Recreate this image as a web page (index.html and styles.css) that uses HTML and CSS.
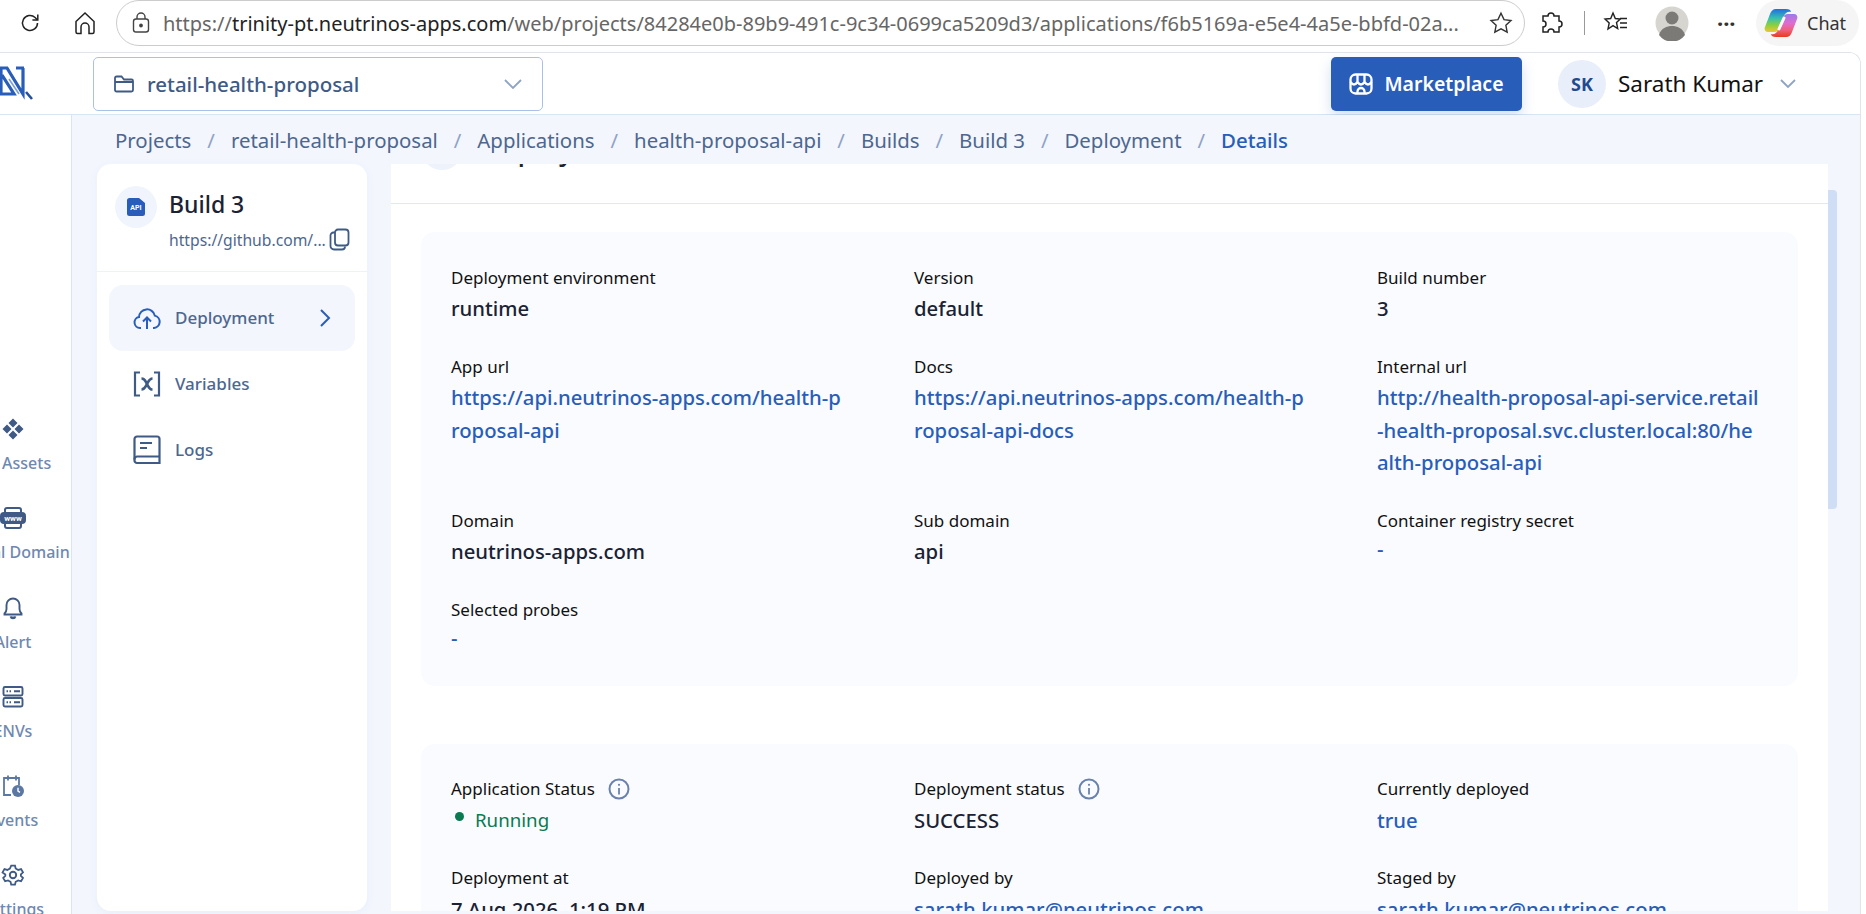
FILE: index.html
```html
<!DOCTYPE html>
<html lang="en">
<head>
  <meta charset="UTF-8" />
  <title>Deployment Details</title>
  <link rel="stylesheet" href="styles.css">
</head>
<body>
  <!-- Browser toolbar -->
  <div class="browser-bar">
    <svg class="b-reload" width="24" height="24" viewBox="0 0 24 24" fill="none" stroke="#222" stroke-width="1.5"><path d="M19.5 12a7.5 7.5 0 1 1-2.4-5.5L19.5 9"/><path d="M19.8 3.5V9h-5.4"/></svg>
    <svg class="b-home" width="24" height="26" viewBox="0 0 24 26" fill="none" stroke="#222" stroke-width="1.5"><path d="M3 11.5 12 3l9 8.5V22a1.5 1.5 0 0 1-1.5 1.5H16V17a4 4 0 0 0-8 0v6.500H4.500A1.500 1.500 0 0 1 3 22z"/></svg>
    <div class="address">
      <svg width="20" height="22" viewBox="0 0 20 22" fill="none" stroke="#444" stroke-width="1.4"><rect x="2.500" y="7" width="15" height="13" rx="2.500"/><path d="M6 7V5a4 4 0 0 1 8 0v2"/><circle cx="10" cy="13.500" r="1.200" fill="#444"/></svg>
      <span class="url"><span class="url-dim">https://</span>trinity-pt.neutrinos-apps.com<span class="url-dim">/web/projects/84284e0b-89b9-491c-9c34-0699ca5209d3/applications/f6b5169a-e5e4-4a5e-bbfd-02a...</span></span>
      <svg class="star" width="26" height="26" viewBox="0 0 24 24" fill="none" stroke="#333" stroke-width="1.300"><path d="m12 3 2.800 5.900 6.400.8-4.700 4.400 1.200 6.400L12 17.400l-5.700 3.100 1.200-6.400-4.700-4.400 6.400-.8z"/></svg>
    </div>
    <svg class="b-ext" width="24" height="26" viewBox="0 0 24 26" fill="none" stroke="#222" stroke-width="1.500"><path d="M9 6a3 3 0 0 1 6 0h5v5a3 3 0 0 1 0 6v5h-5a3 3 0 0 0-6 0H4v-5a3 3 0 0 0 0-6V6z"/></svg>
    <span class="b-sep"></span>
    <svg class="b-fav" width="28" height="28" viewBox="0 0 28 28" fill="none" stroke="#222" stroke-width="1.400"><path d="m11 4 2.300 5.500 5 .5-3.800 3.500 1.200 6L11 16.700 6 20l1.200-6L3 10l5.700-.5z"/><path d="M18 9.500h7M18 14h7M18 18.500h7"/></svg>
    <div class="b-profile">
      <svg width="36" height="36" viewBox="0 0 36 36"><circle cx="18" cy="18" r="16.500" fill="#d6d5d0"/><circle cx="18" cy="13" r="6.500" fill="#7c7a76"/><path d="M5 30c2-7 8-9 13-9s11 2 13 9a16 16 0 0 1-26 0z" fill="#7c7a76"/></svg>
    </div>
    <span class="b-dots">···</span>
    <div class="chat-pill">
      <svg width="34" height="30" viewBox="0 0 34 30">
        <defs>
          <linearGradient id="cpA" x1="0" y1="0" x2="0" y2="1"><stop offset="0" stop-color="#1f6fe0"/><stop offset=".4" stop-color="#36c0b0"/><stop offset=".7" stop-color="#8bd040"/><stop offset="1" stop-color="#f4c430"/></linearGradient>
          <linearGradient id="cpB" x1="0" y1="0" x2="0" y2="1"><stop offset="0" stop-color="#9a7ae8"/><stop offset=".4" stop-color="#e06cd0"/><stop offset=".7" stop-color="#f0607a"/><stop offset="1" stop-color="#e8381e"/></linearGradient>
        </defs>
        <path d="M12 1H22C25 1 27 2 27 4C24 3 21 5 20 8L16 19C15 22 13 24 10 24H4C1 24 0 21 1 19L6 6C7 3 9 1 12 1Z" fill="url(#cpA)"/>
        <path d="M22 29H12C9 29 7 28 7 26C10 27 13 25 14 22L18 11C19 8 21 6 24 6H30C33 6 34 9 33 11L28 24C27 27 25 29 22 29Z" fill="url(#cpB)"/>
        <path d="M20 10 15 21" stroke="#fff" stroke-width="3" stroke-linecap="round"/>
      </svg>
      <span>Chat</span>
    </div>
  </div>

  <div class="app">
    <header class="topbar">
      <svg class="logo" width="34" height="38" viewBox="0 0 34 38" fill="none" stroke="#285db9" stroke-width="3.200">
        <path d="M0 3h7l16 26V3"/>
        <path d="M1 3v26h13L2 10"/>
        <path d="M16 3h8"/>
        <path d="M9 14 19 29" stroke="#7ba0dc" stroke-width="1.600"/>
        <path d="M26 27l6 7" stroke-width="2.600" stroke="#234f9e"/>
      </svg>
      <div class="project-select">
        <svg width="22" height="20" viewBox="0 0 22 20" fill="none" stroke="#3e5a85" stroke-width="1.800"><path d="M2 16V4a1.500 1.500 0 0 1 1.500-1.500h5L11 5.500h7.500A1.500 1.500 0 0 1 20 7v9a1.500 1.500 0 0 1-1.500 1.500h-15A1.500 1.500 0 0 1 2 16z"/><path d="M2 8h18"/></svg>
        <span class="project-name">retail-health-proposal</span>
        <svg class="select-arrow" width="20" height="12" viewBox="0 0 20 12" fill="none" stroke="#8ea3c6" stroke-width="1.800"><path d="m2 2 8 8 8-8"/></svg>
      </div>
      <button class="market-btn">
        <svg width="24" height="22" viewBox="0 0 24 22" fill="none" stroke="#fff" stroke-width="2.300"><rect x="1.500" y="1.500" width="21" height="19" rx="5"/><path d="M8.500 2v7M15.500 2v7M1.500 9q3.500 5 7 0 3.500 5 7 0 3.500 5 7 0M8.500 20.500v-2a3.500 3.500 0 0 1 7 0v2"/></svg>
        Marketplace
      </button>
      <div class="user">
        <span class="avatar">SK</span>
        <span class="user-name">Sarath Kumar</span>
        <svg width="18" height="11" viewBox="0 0 18 11" fill="none" stroke="#8ea3c6" stroke-width="1.800"><path d="m2 2 7 7 7-7"/></svg>
      </div>
    </header>

    <div class="layout">
      <nav class="sidenav">
        <div class="sidenav-items">
          <a class="side-item">
            <svg width="24" height="24" viewBox="0 0 24 24" fill="#3e5a85"><path d="m12 1.500 4.500 4.500-4.500 4.500L7.500 6zM6 7.500l4.500 4.500L6 16.500 1.500 12zM18 7.500l4.500 4.500-4.500 4.500-4.500-4.500zM12 13.500l4.500 4.500-4.500 4.500L7.500 18z"/></svg>
            <span>My Assets</span>
          </a>
          <a class="side-item">
            <svg width="26" height="24" viewBox="0 0 26 24" fill="none" stroke="#3e5a85" stroke-width="2"><path d="M5 7V4a2 2 0 0 1 2-2h12a2 2 0 0 1 2 2v3M5 17v3a2 2 0 0 0 2 2h12a2 2 0 0 0 2-2v-3"/><rect x="1" y="7" width="24" height="10" rx="3" fill="#3e5a85"/><text x="13" y="15" font-size="8" font-weight="700" fill="#fff" stroke="none" text-anchor="middle" font-family="Roboto, sans-serif">www</text></svg>
            <span>Global Domain</span>
          </a>
          <a class="side-item">
            <svg width="24" height="24" viewBox="0 0 24 24" fill="none" stroke="#3e5a85" stroke-width="1.900"><path d="M12 2.500a6.500 6.500 0 0 0-6.500 6.500v4c0 2-1 3.500-2 4.500v1h17v-1c-1-1-2-2.500-2-4.500V9A6.500 6.500 0 0 0 12 2.500z"/><path d="M9.500 20.500a2.600 2.600 0 0 0 5 0" fill="#3e5a85"/></svg>
            <span>Alert</span>
          </a>
          <a class="side-item">
            <svg width="24" height="24" viewBox="0 0 24 24" fill="none" stroke="#3e5a85" stroke-width="1.900"><rect x="2.500" y="2" width="19" height="8.500" rx="1.500"/><rect x="2.500" y="13" width="19" height="8.500" rx="1.500"/><path d="M5.500 6.300h1.500M8.500 6.300H10M13 6.300h6M5.500 17.300h1.500M8.500 17.300H10M13 17.300h6"/></svg>
            <span>ENVs</span>
          </a>
          <a class="side-item">
            <svg width="24" height="24" viewBox="0 0 24 24" fill="none" stroke="#5b77a3" stroke-width="1.800"><path d="M10 21H3V4h15v7M7 1.500v5M15 1.500v5"/><circle cx="17" cy="17" r="6" fill="#5b77a3" stroke="none"/><path d="M17 13.800V17l2 1.300" stroke="#fff" stroke-width="1.400"/></svg>
            <span>Events</span>
          </a>
          <a class="side-item">
            <svg width="24" height="24" viewBox="0 0 24 24" fill="none" stroke="#3e5a85" stroke-width="1.900"><circle cx="12" cy="12" r="3.200"/><path d="M10 2.500h4l.7 3 2.700 1.500 3-.9 2 3.500-2.200 2.100v1.600l2.200 2.100-2 3.500-3-.9-2.700 1.500-.7 3h-4l-.7-3-2.700-1.500-3 .9-2-3.500 2.200-2.100v-1.600L.9 9.600l2-3.500 3 .9L8.600 5.500z" transform="translate(.7 .3) scale(.95)"/></svg>
            <span>Settings</span>
          </a>
        </div>
      </nav>

      <main class="main">
        <div class="breadcrumb">
          <a>Projects</a><i>/</i>
          <a>retail-health-proposal</a><i>/</i>
          <a>Applications</a><i>/</i>
          <a>health-proposal-api</a><i>/</i>
          <a>Builds</a><i>/</i>
          <a>Build 3</a><i>/</i>
          <a>Deployment</a><i>/</i>
          <a class="current">Details</a>
        </div>

        <div class="content">
          <aside class="build-card">
            <div class="build-head">
              <span class="build-icon">
                <svg width="18" height="18" viewBox="0 0 18 18"><path d="M2.500 0H12l6 5v10.500a2.500 2.500 0 0 1-2.500 2.500h-13A2.500 2.500 0 0 1 0 15.500v-13A2.500 2.500 0 0 1 2.500 0z" fill="#285db9"/><text x="9" y="12" font-size="7" font-weight="700" fill="#fff" text-anchor="middle" font-family="Roboto, sans-serif">API</text></svg>
              </span>
              <div class="build-info">
                <div class="build-name">Build 3</div>
                <div class="build-url">
                  <span>https://github.com/...</span>
                  <svg width="21" height="23" viewBox="0 0 21 23" fill="none" stroke="#3e5a85" stroke-width="1.800"><rect x="6" y="1.500" width="13.500" height="16" rx="3"/><path d="M6 4.500H4.500a3 3 0 0 0-3 3V18a3.500 3.500 0 0 0 3.500 3.500h8a3 3 0 0 0 3-3"/></svg>
                </div>
              </div>
            </div>
            <div class="build-menu">
              <a class="menu-item active">
                <svg width="28" height="26" viewBox="0 0 28 26" fill="none" stroke="#285db9" stroke-width="2"><path d="M8 23H7a5.500 5.500 0 0 1-1-10.900 8 8 0 0 1 15.800-1.500A6.300 6.300 0 0 1 21 23h-1"/><path d="M14 24V13M10 16.500l4-4 4 4"/></svg>
                <span>Deployment</span>
                <svg class="menu-arrow" width="12" height="20" viewBox="0 0 12 20" fill="none" stroke="#285db9" stroke-width="2"><path d="m2 2 8 8-8 8"/></svg>
              </a>
              <a class="menu-item">
                <svg width="28" height="26" viewBox="0 0 28 26" fill="none" stroke="#3e5a85" stroke-width="2.200"><path d="M7 1.500H2v23h5M21 1.500h5v23h-5"/><path d="M8.500 7.500c3.500 0 3.500 2 5.500 5.500s2 5.500 5.500 5.500M19.500 7.500c-3 0-3.500 2-5.500 5.500s-2.500 5.500-5.500 5.500" stroke-width="2.600"/></svg>
                <span>Variables</span>
              </a>
              <a class="menu-item">
                <svg width="28" height="30" viewBox="0 0 28 30" fill="none" stroke="#3e5a85" stroke-width="2.200"><path d="M4 1.500h20a2.500 2.500 0 0 1 2.500 2.500v24H4a2.500 2.500 0 0 1-2.500-2.500V4A2.500 2.500 0 0 1 4 1.500z"/><path d="M1.500 24.500A3 3 0 0 1 4 21.500h22.500M7 8h12M7 13h7"/></svg>
                <span>Logs</span>
              </a>
            </div>
          </aside>

          <section class="panel">
            <div class="panel-head">
              <div class="panel-title">
                <span class="panel-circle"></span>
                <h2>Deployment</h2>
              </div>
            </div>

            <div class="info-box first">
              <div class="info-grid">
                <div class="field"><label>Deployment environment</label><div class="val">runtime</div></div>
                <div class="field"><label>Version</label><div class="val">default</div></div>
                <div class="field"><label>Build number</label><div class="val">3</div></div>

                <div class="field"><label>App url</label><div class="val link">https://api.neutrinos-apps.com/health-p<br>roposal-api</div></div>
                <div class="field"><label>Docs</label><div class="val link">https://api.neutrinos-apps.com/health-p<br>roposal-api-docs</div></div>
                <div class="field"><label>Internal url</label><div class="val link">http://health-proposal-api-service.retail<br>-health-proposal.svc.cluster.local:80/he<br>alth-proposal-api</div></div>

                <div class="field"><label>Domain</label><div class="val">neutrinos-apps.com</div></div>
                <div class="field"><label>Sub domain</label><div class="val">api</div></div>
                <div class="field"><label>Container registry secret</label><div class="val link dash">-</div></div>

                <div class="field"><label>Selected probes</label><div class="val link dash">-</div></div>
              </div>
            </div>

            <div class="info-box">
              <div class="info-grid">
                <div class="field">
                  <label>Application Status
                    <svg class="info-icon" width="22" height="22" viewBox="0 0 22 22" fill="none" stroke="#6a82ab" stroke-width="2"><circle cx="11" cy="11" r="9.500"/><path d="M11 10v6.500" stroke-width="1.800"/><circle cx="11" cy="6.800" r="1.100" fill="#6a82ab" stroke="none"/></svg>
                  </label>
                  <div class="val running"><span class="dot"></span>Running</div>
                </div>
                <div class="field">
                  <label>Deployment status
                    <svg class="info-icon" width="22" height="22" viewBox="0 0 22 22" fill="none" stroke="#6a82ab" stroke-width="2"><circle cx="11" cy="11" r="9.500"/><path d="M11 10v6.500" stroke-width="1.800"/><circle cx="11" cy="6.800" r="1.100" fill="#6a82ab" stroke="none"/></svg>
                  </label>
                  <div class="val">SUCCESS</div>
                </div>
                <div class="field"><label>Currently deployed</label><div class="val link">true</div></div>

                <div class="field"><label>Deployment at</label><div class="val">7 Aug 2026, 1:19 PM</div></div>
                <div class="field"><label>Deployed by</label><div class="val link">sarath.kumar@neutrinos.com</div></div>
                <div class="field"><label>Staged by</label><div class="val link">sarath.kumar@neutrinos.com</div></div>
              </div>
            </div>
          </section>

          <div class="scroll-track"><div class="scroll-thumb"></div></div>
        </div>
      </main>
    </div>
  </div>
</body>
</html>
```

FILE: styles.css
```css
* {
  box-sizing: border-box;
}
html, body {
  margin: 0;
  height: 914px;
  overflow: hidden;
}
body {
  font-family: 'Noto Sans', 'Roboto', sans-serif;
  background-color: #fff;
  color: #1a2233;
}
a {
  text-decoration: none;
}

/* Browser toolbar */
.browser-bar {
  height: 52px;
  display: flex;
  align-items: center;
  padding-bottom: 6px;
  background: #fff;
}
.b-reload {
  margin-left: 18px;
}
.b-home {
  margin-left: 31px;
}
.address {
  margin-left: 19px;
  width: 1409px;
  height: 46px;
  border: 1.5px solid #ccc;
  border-radius: 23px;
  display: flex;
  align-items: center;
  padding-left: 14px;
  gap: 12px;
}
.url {
  flex: 1;
  font-size: 20px;
  white-space: nowrap;
  overflow: hidden;
  color: #222;
}
.url-dim {
  color: #666;
}
.star {
  margin-right: 10px;
}
.b-ext {
  margin-left: 14px;
}
.b-sep {
  width: 1px;
  height: 24px;
  background: #999;
  margin-left: 21px;
}
.b-fav {
  margin-left: 17px;
}
.b-profile {
  margin-left: 24px;
  height: 36px;
}
.b-dots {
  margin-left: 27px;
  font-size: 22px;
  font-weight: 700;
  color: #333;
  width: 28px;
}
.chat-pill {
  margin-left: 11px;
  width: 103px;
  height: 46px;
  border-radius: 23px;
  background: #f5f5f5;
  display: flex;
  align-items: center;
  gap: 9px;
  padding-left: 8px;
  font-size: 18px;
  color: #333;
}

/* App frame */
.app {
  width: 1861px;
  height: 862px;
  border-top: 1px solid #dfe3ea;
  border-right: 1px solid #dfe3ea;
  border-top-right-radius: 12px;
  display: flex;
  flex-direction: column;
  overflow: hidden;
}
.topbar {
  height: 62px;
  flex-shrink: 0;
  display: flex;
  align-items: center;
  border-bottom: 1px solid #d9e4f5;
  background: #fff;
}
.logo {
  flex-shrink: 0;
}
.project-select {
  margin-left: 59px;
  width: 450px;
  height: 54px;
  border: 1px solid #a9c1ea;
  border-radius: 5px;
  display: flex;
  align-items: center;
  padding: 0 19px;
  gap: 12px;
}
.project-name {
  flex: 1;
  font-size: 20.500px;
  font-weight: 500;
  color: #3e5a85;
}
.market-btn {
  margin-left: 788px;
  width: 191px;
  height: 54px;
  border: none;
  border-radius: 5px;
  background-color: #285db9;
  color: #fff;
  font-family: inherit;
  font-size: 19.500px;
  font-weight: 600;
  display: flex;
  align-items: center;
  justify-content: center;
  gap: 11px;
  box-shadow: 0 6px 14px rgba(40,93,185,0.2);
}
.user {
  margin-left: 36px;
  display: flex;
  align-items: center;
}
.avatar {
  width: 48px;
  height: 48px;
  border-radius: 50%;
  background: #e8eefa;
  color: #1f4a8f;
  font-size: 18px;
  font-weight: 700;
  display: flex;
  align-items: center;
  justify-content: center;
}
.user-name {
  margin: 0 16px 0 12px;
  font-size: 22.500px;
  color: #111;
}

.layout {
  flex: 1;
  display: flex;
  min-height: 0;
}

/* Left icon rail */
.sidenav {
  width: 72px;
  flex-shrink: 0;
  border-right: 1px solid #d9e4f5;
  background: #fff;
  overflow: hidden;
}
.sidenav-items {
  width: 52px;
  margin-left: -13px;
  padding-top: 302px;
  display: flex;
  flex-direction: column;
  gap: 33.300px;
}
.side-item {
  height: 56px;
  display: flex;
  flex-direction: column;
  align-items: center;
  gap: 12px;
  color: #6f88b0;
  font-size: 16px;
  font-weight: 500;
  white-space: nowrap;
}
.side-item span {
  line-height: 20px;
}

/* Main area */
.main {
  flex: 1;
  min-width: 0;
  background-color: #f3f6fd;
  padding-left: 25px;
}
.breadcrumb {
  height: 49px;
  padding: 1px 0 0 18px;
  display: flex;
  align-items: center;
  font-size: 20.400px;
  color: #4d678f;
}
.breadcrumb i {
  width: 39.500px;
  text-align: center;
  font-style: normal;
  color: #8ea3c6;
}
.breadcrumb .current {
  color: #285db9;
  font-weight: 500;
}
.content {
  display: flex;
  height: 747px;
}

/* Build card */
.build-card {
  width: 270px;
  flex-shrink: 0;
  background: #fff;
  border-radius: 14px;
  box-shadow: 0 2px 10px rgba(40,93,185,0.05);
}
.build-head {
  height: 108px;
  padding: 22px 0 0 18px;
  display: flex;
  gap: 12px;
  border-bottom: 1px solid #edf1f8;
}
.build-icon {
  width: 42px;
  height: 42px;
  border-radius: 50%;
  background: #f0f4fc;
  display: flex;
  align-items: center;
  justify-content: center;
  flex-shrink: 0;
}
.build-name {
  margin-top: 1px;
  font-size: 23px;
  font-weight: 500;
  line-height: 34px;
}
.build-url {
  display: flex;
  align-items: center;
  gap: 3px;
  margin-top: 7px;
  font-size: 15.700px;
  color: #4d678f;
  white-space: nowrap;
}
.build-menu {
  padding: 13px 12px;
}
.menu-item {
  height: 66px;
  display: flex;
  align-items: center;
  gap: 14px;
  padding-left: 24px;
  border-radius: 14px;
  font-size: 17px;
  font-weight: 500;
  color: #4d678f;
}
.menu-item span {
  flex: 1;
  margin-top: -2px;
}
.menu-item.active {
  background: #f3f6fd;
}
.menu-arrow {
  margin-right: 24px;
}

/* Details panel */
.panel {
  width: 1437px;
  margin-left: 24px;
  background: #fff;
  overflow: hidden;
  flex-shrink: 0;
}
.panel-head {
  height: 40px;
  border-bottom: 1px solid #e2e9f4;
  overflow: hidden;
}
.panel-title {
  display: flex;
  gap: 18px;
  margin: -36px 0 0 30px;
  height: 42px;
}
.panel-circle {
  width: 42px;
  height: 42px;
  border-radius: 50%;
  background: #eef2fb;
  flex-shrink: 0;
}
.panel-title h2 {
  margin: 7px 0 0;
  font-size: 28px;
  line-height: 28px;
  font-weight: 500;
}
.info-box {
  margin: 57.500px 30px 0;
  padding: 33px 30px 35px;
  background-color: #f9fbff;
  border-radius: 14px;
}
.info-box.first {
  margin-top: 28px;
}
.info-grid {
  display: grid;
  grid-template-columns: repeat(3, 389px);
  column-gap: 74px;
  row-gap: 29.500px;
}
.field label {
  display: flex;
  align-items: center;
  gap: 13px;
  height: 24px;
  font-size: 17px;
  color: #111;
}
.val {
  margin-top: 3px;
  font-size: 20.300px;
  line-height: 32.500px;
  font-weight: 500;
  white-space: nowrap;
}
.val.link {
  color: #285db9;
}
.val.dash {
  line-height: 27px;
}
.running {
  display: flex;
  align-items: center;
  color: #0a7a50;
  font-size: 18.700px;
  font-weight: 400;
}
.dot {
  width: 9px;
  height: 9px;
  border-radius: 50%;
  background: #0a7a50;
  margin: -6px 11px 0 4px;
}

.scroll-track {
  width: 9px;
  padding-top: 26px;
  flex-shrink: 0;
}
.scroll-thumb {
  height: 319px;
  background: #cfdef4;
  border-radius: 0 4px 4px 0;
}
```
